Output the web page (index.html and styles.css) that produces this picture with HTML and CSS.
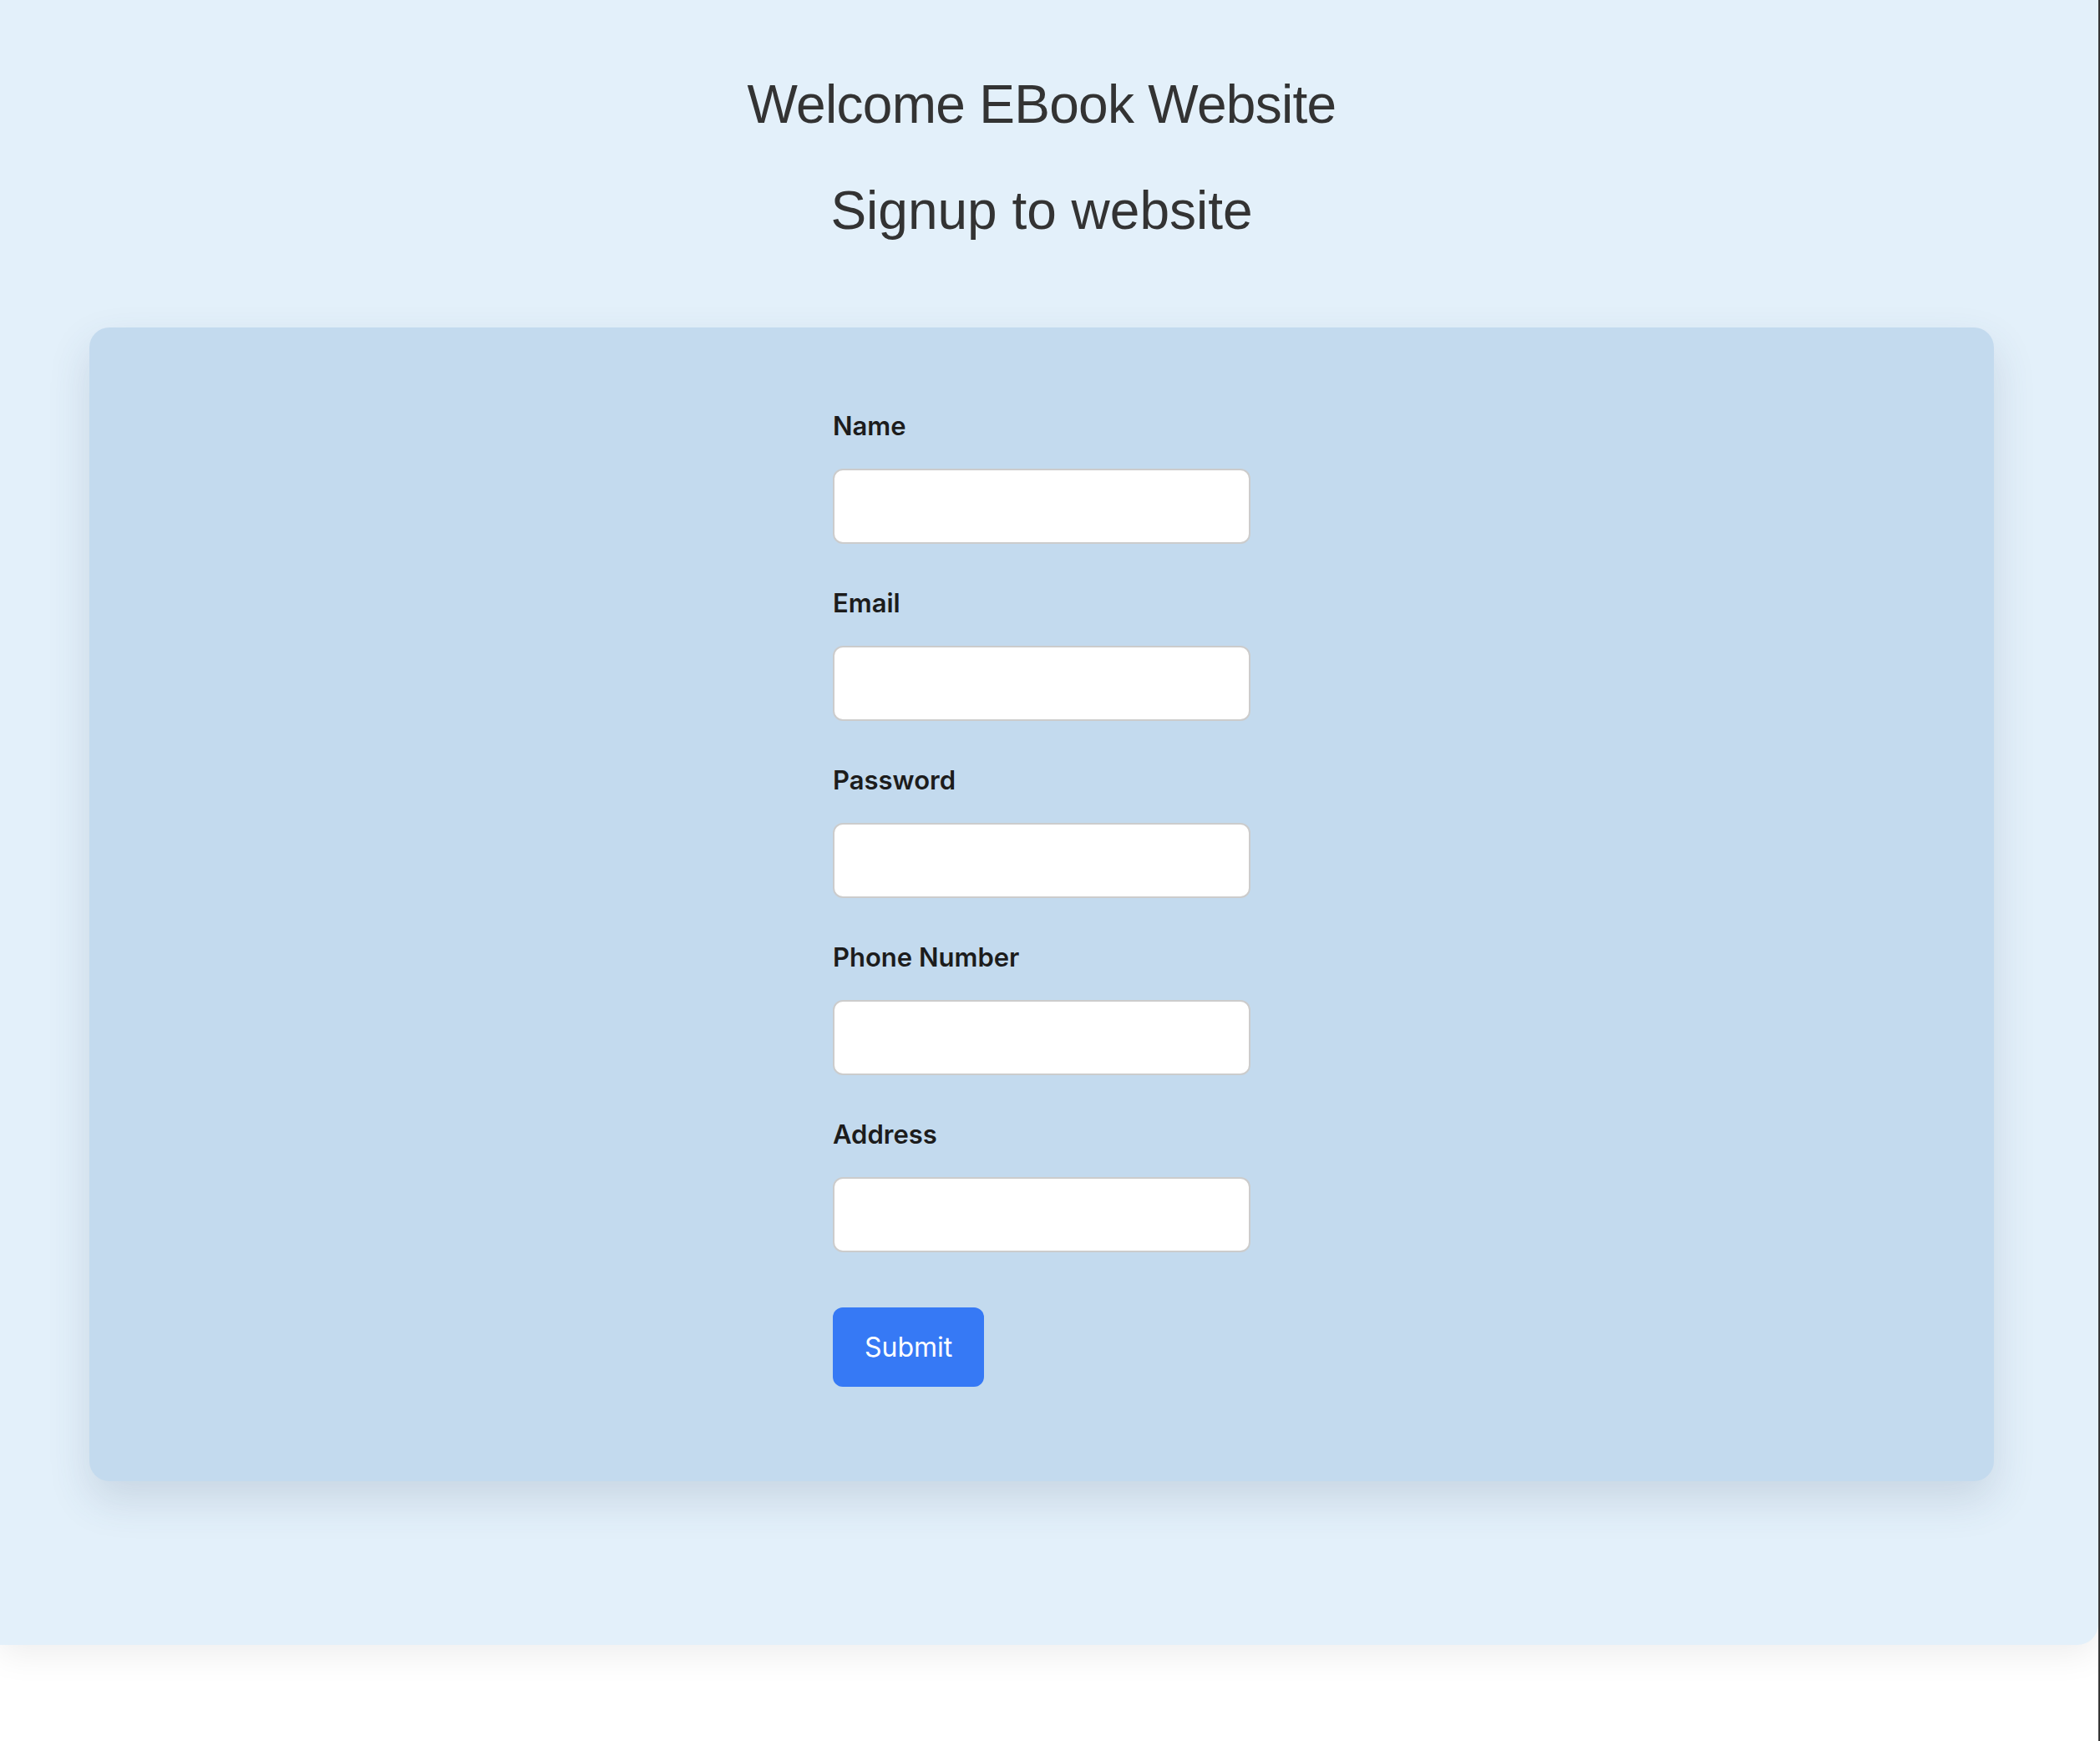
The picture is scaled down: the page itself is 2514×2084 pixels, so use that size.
FILE: index.html
```html
<!DOCTYPE html>
<html lang="en">
<head>
<meta charset="utf-8">
<title>Signup</title>
<link rel="stylesheet" href="styles.css">
</head>
<body>
<div class="page">
  <h1 class="title">Welcome EBook Website</h1>
  <h1 class="subtitle">Signup to website</h1>
  <div class="card">
    <form class="form">
      <div class="group">
        <label for="name">Name</label>
        <input id="name" type="text">
      </div>
      <div class="group">
        <label for="email">Email</label>
        <input id="email" type="email">
      </div>
      <div class="group">
        <label for="password">Password</label>
        <input id="password" type="password">
      </div>
      <div class="group">
        <label for="phone">Phone Number</label>
        <input id="phone" type="tel">
      </div>
      <div class="group">
        <label for="address">Address</label>
        <input id="address" type="text">
      </div>
      <button type="button" class="submit">Submit</button>
    </form>
  </div>
</div>
</body>
</html>
```
FILE: styles.css
```css
html, body {
  margin: 0;
  padding: 0;
  background: #ffffff;
}
body {
  min-height: 100vh;
  box-sizing: border-box;
  border-right: 2px solid #363636;
}
.page {
  background: #e3f0fa;
  padding: 88px 125px 196px 107px;
  border-radius: 0 0 25px 0;
  box-shadow: 0 12px 40px rgba(0, 0, 0, 0.07);
}
.title, .subtitle {
  margin: 0;
  text-align: center;
  font-family: "Liberation Sans", Arial, sans-serif;
  font-weight: 400;
  font-size: 64px;
  line-height: 74px;
  color: #333333;
}
.title {
  letter-spacing: -0.7px;
}
.subtitle {
  margin-top: 53px;
}
.card {
  margin-top: 103px;
  background: #c3daee;
  border-radius: 24px;
  padding: 94px 0 113px;
  box-shadow: 0 22px 50px rgba(60, 80, 110, 0.16);
}
.form {
  width: 500px;
  margin: 0 auto;
  display: flex;
  flex-direction: column;
  align-items: flex-start;
  gap: 47px;
  font-family: Inter, "Noto Sans", sans-serif;
}
.group {
  display: flex;
  flex-direction: column;
  align-self: stretch;
}
.group label {
  font-size: 31px;
  line-height: 48px;
  font-weight: 600;
  color: #1c1c1c;
  margin-bottom: 27px;
}
.group input {
  box-sizing: border-box;
  width: 500px;
  height: 90px;
  border: 2px solid #cccccc;
  border-radius: 12px;
  background: #ffffff;
  padding: 0 20px;
  font-size: 32px;
  outline: none;
}
.submit {
  margin-top: 19px;
  box-sizing: border-box;
  height: 95px;
  padding: 0 38px;
  border: none;
  border-radius: 12px;
  background: #3679f5;
  color: #ffffff;
  font-family: Inter, "Noto Sans", sans-serif;
  font-size: 32px;
  font-weight: 400;
}
```
